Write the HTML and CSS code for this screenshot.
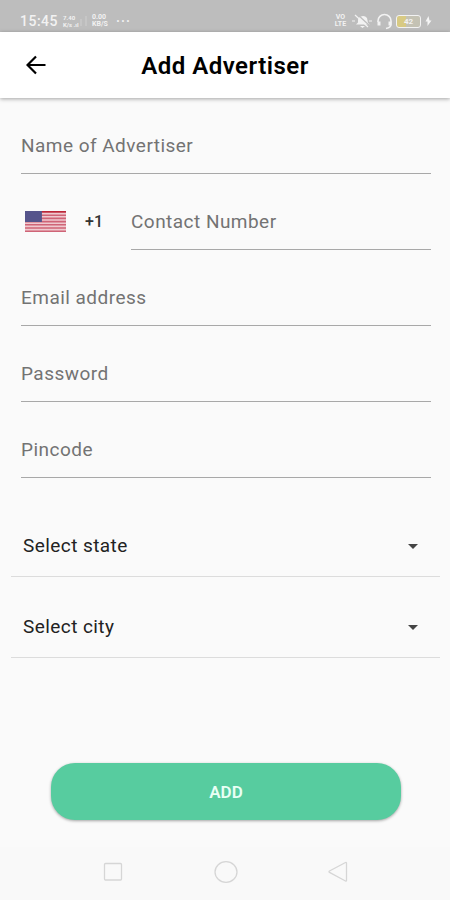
FILE: index.html
```html
<!DOCTYPE html>
<html lang="en">
<head>
    <meta charset="UTF-8">
    <meta name="viewport" content="width=device-width, initial-scale=1.0">
    <title>Add Advertiser</title>
    <link rel="stylesheet" href="styles.css">
</head>
<body>
    <div class="status-bar">
        <span class="clock">15:45</span>
        <div class="stack speed"><span>7.40</span><span>K/s .ıl</span></div>
        <svg class="signal" width="8" height="12" viewBox="0 0 8 12">
            <path d="M1 4v7M6 1v10"/>
        </svg>
        <div class="stack rate"><span>0.00</span><span>KB/S</span></div>
        <span class="more">···</span>
        <div class="status-icons">
            <div class="stack volte"><span>VO</span><span>LTE</span></div>
            <svg width="20" height="16" viewBox="0 0 20 16">
                <path d="M4 11.5l2-2V7a5 4.500 0 0 1 9-2l1 5 2 1.500zM8 13h5l-2.500 2z" fill="#f2f2f2"/>
                <path d="M5 1l13 12" stroke="#bdbdbd" stroke-width="1.2"/>
                <path d="M0 8h3M17 8h3M3 2l13 12" stroke="#f2f2f2" stroke-width="1.2"/>
            </svg>
            <svg width="17" height="17" viewBox="0 0 17 17" fill="none" stroke="#f2f2f2">
                <path d="M2 9V8a6.500 6.500 0 0 1 13 0v3c0 3-2 4-5 4.500" stroke-width="1.600"/>
                <path d="M3 8.500v4M14 8.500v4" stroke-width="3"/>
            </svg>
            <div class="battery"><span>42</span></div>
            <svg width="7" height="12" viewBox="0 0 7 12">
                <path d="M3.500 1L0.500 6.500h2V11l4-5.500h-2z" fill="#f5f5f5"/>
            </svg>
        </div>
    </div>

    <header class="app-bar">
        <svg class="back" width="20" height="20" viewBox="0 0 20 20">
            <path d="M19.500 10H1.500M10 1.500L1.500 10l8.500 8.500"/>
        </svg>
        <h1>Add Advertiser</h1>
    </header>

    <main class="form">
        <div class="field">Name of Advertiser</div>
        <div class="phone-row">
            <div class="country">
                <svg width="41" height="21" viewBox="0 0 40 21" preserveAspectRatio="none">
                    <rect width="40" height="21" fill="#efc9cf"/>
                    <rect width="40" height="1.700" fill="#bd2638"/>
                    <path d="M0 4.200h40M0 7.400h40M0 10.600h40M0 13.800h40M0 17h40M0 20.200h40" stroke="#cf6477" stroke-width="1.600"/>
                    <rect width="16.500" height="11" fill="#55548b"/>
                </svg>
                <span class="code">+1</span>
            </div>
            <div class="field">Contact Number</div>
        </div>
        <div class="field">Email address</div>
        <div class="field">Password</div>
        <div class="field">Pincode</div>

        <div class="selects">
            <div class="select"><span>Select state</span><i class="caret"></i></div>
            <div class="select"><span>Select city</span><i class="caret"></i></div>
        </div>

        <button class="add-button">ADD</button>
    </main>

    <nav class="nav-bar">
        <svg width="20" height="20" viewBox="0 0 20 20"><rect x="1.500" y="1.500" width="17" height="16.500" rx="1"/></svg>
        <svg width="24" height="22" viewBox="0 0 24 22"><ellipse cx="12" cy="11" rx="11" ry="10.300"/></svg>
        <svg width="20" height="22" viewBox="0 0 20 22"><path d="M17.500 1.500L1.500 10q-1 .7 0 1.400l16 8.600q1 .5 1-.7V2.200q0-1.200-1-.7z"/></svg>
    </nav>
</body>
</html>
```

FILE: styles.css
```css
* {
    box-sizing: border-box;
}
body {
    margin: 0;
    height: 900px;
    display: flex;
    flex-direction: column;
    background-color: #fafafa;
    font-family: Roboto, "Liberation Sans", sans-serif;
    overflow: hidden;
}
.status-bar {
    height: 32px;
    padding: 10px 18px 0 20px;
    display: flex;
    align-items: center;
    background: #bdbdbd;
    color: #f2f2f2;
}
.clock {
    width: 43px;
    font-size: 14px;
    font-weight: 500;
    letter-spacing: 0.5px;
}
.stack {
    display: flex;
    flex-direction: column;
    font-size: 6px;
    line-height: 7px;
    font-weight: bold;
    white-space: nowrap;
}
.speed {
    width: 17px;
}
.signal {
    stroke: #cfcfcf;
    margin-right: 4px;
}
.rate {
    width: 24px;
    font-size: 7px;
}
.more {
    font-size: 14px;
    font-weight: 500;
    letter-spacing: 1px;
}
.status-icons {
    margin-left: auto;
    display: flex;
    align-items: center;
    gap: 4px;
}
.volte {
    width: 15px;
    font-size: 7px;
    align-items: center;
}
.battery {
    width: 25px;
    height: 13px;
    margin-left: -1px;
    border: 1px solid #f2f2f2;
    border-radius: 3px;
    background: linear-gradient(to right, #d8ca83 38%, #c4c2b4 38%);
    font-size: 8px;
    line-height: 11px;
    font-weight: bold;
    text-align: center;
}
.app-bar {
    position: relative;
    height: 66px;
    flex: none;
    display: flex;
    align-items: center;
    justify-content: center;
    background: #fff;
    box-shadow: 0 1px 4px rgba(0, 0, 0, 0.35);
}
.app-bar h1 {
    margin: 1px 0 0;
    font-size: 24px;
    line-height: 28px;
    font-weight: 600;
    letter-spacing: 0.5px;
    color: #000;
}
.back {
    position: absolute;
    left: 26px;
    top: 23px;
    fill: none;
    stroke: #000;
    stroke-width: 2.2;
}
.form {
    flex: 1;
    padding: 15px 10px 0 11px;
    display: flex;
    flex-direction: column;
}
.field {
    height: 61px;
    margin: 0 9px 15px 10px;
    padding-top: 20px;
    border-bottom: 1px solid #a8a8a8;
    font-size: 19px;
    line-height: 25px;
    letter-spacing: 0.47px;
    color: #737373;
}
.phone-row {
    display: flex;
}
.country {
    width: 110px;
    padding: 20px 0 0 14px;
    display: flex;
    gap: 19px;
    height: 45px;
    align-items: center;
}
.code {
    font-size: 16px;
    font-weight: 500;
    color: #333;
}
.phone-row .field {
    flex: 1;
    margin-left: 10px;
}
.selects {
    padding-top: 3px;
}
.select {
    height: 81px;
    padding: 19px 22px 0 12px;
    display: flex;
    align-items: center;
    justify-content: space-between;
    border-bottom: 1px solid #dcdcdc;
    font-size: 19px;
    letter-spacing: 0.43px;
    color: #222;
}
.caret {
    margin-top: 1px;
    border: 5.5px solid transparent;
    border-top-color: #444;
    border-bottom: 0;
}
.add-button {
    width: 350px;
    height: 57px;
    margin: 105px 0 0 40px;
    border: 0;
    border-radius: 24px;
    background: #57cc9f;
    box-shadow: 0 1px 3px rgba(0, 0, 0, 0.35);
    font: 600 17px Roboto, sans-serif;
    color: #e9fff5;
}
.nav-bar {
    height: 53px;
    padding: 0 102px 3px 103px;
    display: flex;
    align-items: center;
    justify-content: space-between;
    background: #f9f9f9;
}
.nav-bar svg {
    fill: none;
    stroke: #d6d6d6;
    stroke-width: 1.3;
}
```
